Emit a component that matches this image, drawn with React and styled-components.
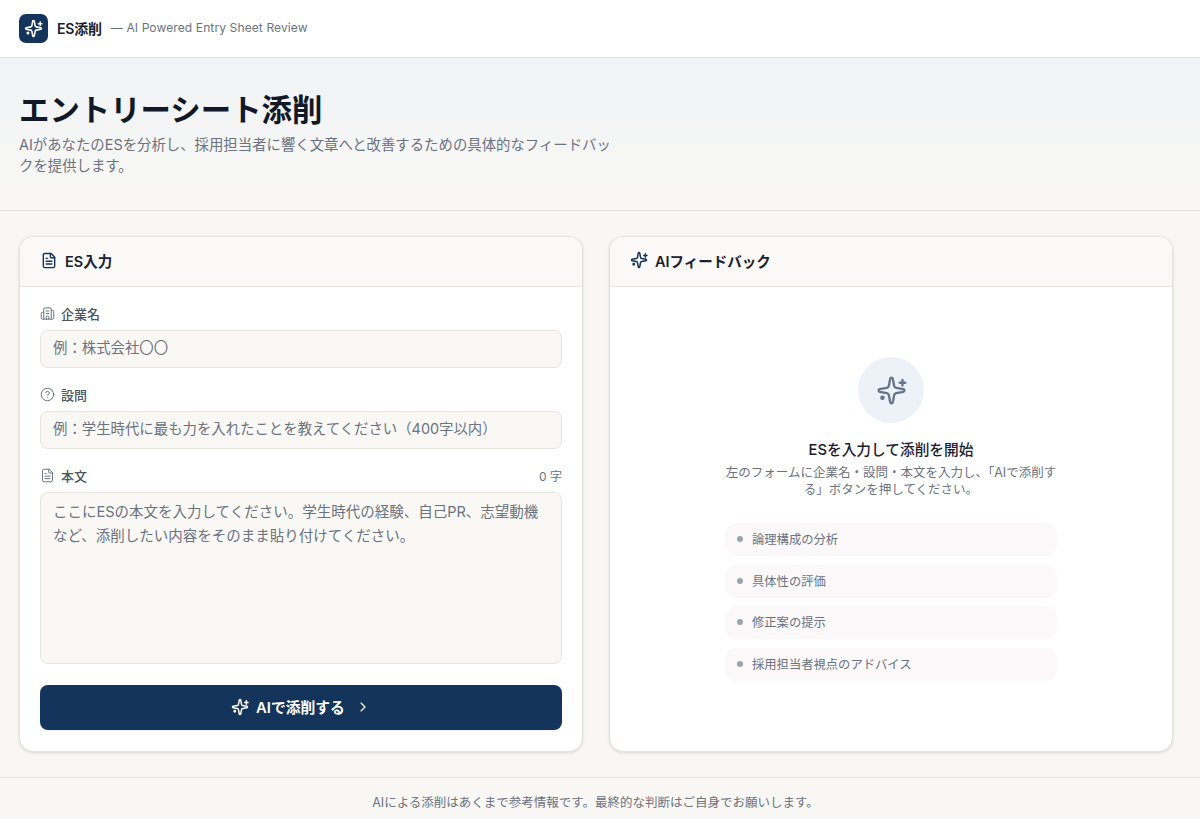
import React from "react";
import styled, { createGlobalStyle } from "styled-components";
import { FileText, Building2, CircleHelp, ChevronRight } from "lucide-react";

const Global = createGlobalStyle`
  * { box-sizing: border-box; }
  html, body { margin: 0; padding: 0; }
  body { background: #f8f7f4; font-family: Inter, "Noto Sans CJK JP", sans-serif; color: #111827; }
`;
const Spark = ({ size = 18, sw = 2 }) => (
  <svg width={size} height={size} viewBox="0 0 24 24" fill="none" stroke="currentColor" strokeWidth={sw} strokeLinecap="round" strokeLinejoin="round">
    <path d="M11.017 2.814a1 1 0 0 1 1.966 0l1.051 5.558a2 2 0 0 0 1.594 1.594l5.558 1.051a1 1 0 0 1 0 1.966l-5.558 1.051a2 2 0 0 0-1.594 1.594l-1.051 5.558a1 1 0 0 1-1.966 0l-1.051-5.558a2 2 0 0 0-1.594-1.594l-5.558-1.051a1 1 0 0 1 0-1.966l5.558-1.051a2 2 0 0 0 1.594-1.594z" />
    <path d="M20.5 3.8v4.4M18.3 6h4.4" />
    <circle cx="5" cy="17.6" r="0.9" fill="currentColor" />
  </svg>
);
const Page = styled.div`width: 1200px; height: 819px; display: flex; flex-direction: column; overflow: hidden;`;
const TopBar = styled.header`height: 58px; flex: none; background: #fff; border-bottom: 1px solid #e3e4e6; display: flex; align-items: center; padding: 0 19px 1px;`;
const Logo = styled.div`width: 29px; height: 29px; border-radius: 7px; background: #14345c; color: #fff; display: flex; align-items: center; justify-content: center;`;
const Brand = styled.span`font-size: 14px; font-weight: 600; margin-left: 9px; color: #1a2230; letter-spacing: -0.2px;`;
const Tagline = styled.span`font-size: 12px; color: #6b7280; margin: 0 0 1px 9px; letter-spacing: 0.12px;`;
const Hero = styled.section`height: 153px; flex: none; padding: 33px 19px 0; background: linear-gradient(180deg, #f1f3f6 0%, #f8f7f4 100%); border-bottom: 1px solid #e6e4df;`;
const Title = styled.h1`margin: 0; font-size: 30.4px; line-height: 38px; font-weight: 700; color: #111827;`;
const Lead = styled.p`margin: 5px 0 0; width: 600px; font-size: 14.4px; line-height: 21px; color: #6b7280;`;
const Main = styled.main`flex: none; height: 567px; padding: 25px 27px 25px 19px; display: grid; grid-template-columns: 564px 564px; gap: 26px; border-bottom: 1px solid #e6e4df;`;
const Card = styled.section`background: #fff; border: 1px solid #e3e1dc; border-radius: 14px; box-shadow: 0 1px 3px rgba(0,0,0,.12); overflow: hidden; display: flex; flex-direction: column;`;
const CardHead = styled.div`height: 50px; flex: none; display: flex; align-items: center; gap: 7px; padding: 0 20px 3px; background: #faf9f7; border-bottom: 1px solid #e8e6e1; font-size: 14.5px; font-weight: 600; color: #1a2230; svg { color: #14345c; flex: none; width: 18px; }`;
const Form = styled.div`flex: 1; display: flex; flex-direction: column; padding: 17px 20px 20px;`;
const Field = styled.div`margin-bottom: ${p => p.$gap}px; display: flex; flex-direction: column;`;
const LabelRow = styled.div`height: 20px; display: flex; align-items: center; gap: 6px; font-size: 13px; font-weight: 500; color: #4b5563; margin: -1px 0 7px; svg { color: #6b7280; }`;
const Count = styled.span`margin-left: auto; font-size: 12px; font-weight: 400; color: #6b7280;`;
const Input = styled.input`height: 37.5px; width: 100%; border: 1px solid #e6e4df; border-radius: 8px; background: #f9f8f5; padding: 0 12px 2px; font: inherit; font-size: 14.4px;
  &::placeholder { color: #6b7280; opacity: 1; }`;
const Area = styled.textarea`height: 172px; width: 100%; resize: none; border: 1px solid #e6e4df; border-radius: 8px; background: #f9f8f5; padding: 7px 12px; font: inherit; font-size: 14.5px; line-height: 24px;
  &::placeholder { color: #6b7280; opacity: 1; }`;
const Submit = styled.button`height: 45.5px; flex: none; border: 0; border-radius: 8px; padding: 0 0 1px; background: #14345c; color: #fff; font: inherit; font-size: 14.8px; font-weight: 600; display: flex; align-items: center; justify-content: center; gap: 7px; box-shadow: 0 1px 2px rgba(0,0,0,.08);`;
const Chevron = styled.span`display: flex; margin-left: 3px;`;
const Empty = styled.div`flex: 1; display: flex; flex-direction: column; align-items: center; padding-top: 70px;`;
const Bubble = styled.div`width: 66px; height: 66px; border-radius: 50%; background: #edf2f9; color: #64748b; display: flex; align-items: center; justify-content: center;`;
const EmptyTitle = styled.h2`margin: 16px 0 0; font-size: 14.7px; line-height: 22px; font-weight: 500; color: #1a2230;`;
const EmptyText = styled.p`margin: 3px 0 0; width: 332px; text-align: center; font-size: 12.5px; line-height: 17px; color: #6b7280;`;
const Points = styled.ul`list-style: none; margin: 25px 0 0; padding: 0; width: 332px; display: flex; flex-direction: column; gap: 8.5px;`;
const Point = styled.li`height: 33px; border-radius: 12px; background: #faf8f8; display: flex; align-items: center; gap: 9px; padding: 0 12px 1px; font-size: 12.3px; color: #6b7280;`;
const Dot = styled.i`width: 6px; height: 6px; border-radius: 50%; background: #9ca3af;`;
const Foot = styled.footer`flex: 1; display: flex; align-items: center; justify-content: center; padding: 5px 9px 0 0; font-size: 12.5px; color: #6b7280;`;

export default function App() {
  return (
    <Page>
      <Global />
      <TopBar>
        <Logo><Spark size={19} /></Logo>
        <Brand>ES添削</Brand>
        <Tagline>— AI Powered Entry Sheet Review</Tagline>
      </TopBar>
      <Hero>
        <Title>エントリーシート添削</Title>
        <Lead>AIがあなたのESを分析し、採用担当者に響く文章へと改善するための具体的なフィードバックを提供します。</Lead>
      </Hero>
      <Main>
        <Card>
          <CardHead><FileText size={17} strokeWidth={2} />ES入力</CardHead>
          <Form>
            <Field $gap={17.5}>
              <LabelRow><Building2 size={15} strokeWidth={1.6} />企業名</LabelRow>
              <Input placeholder="例：株式会社〇〇" />
            </Field>
            <Field $gap={17.5}>
              <LabelRow><CircleHelp size={15} strokeWidth={1.6} />設問</LabelRow>
              <Input placeholder="例：学生時代に最も力を入れたことを教えてください（400字以内）" />
            </Field>
            <Field $gap={20.5}>
              <LabelRow><FileText size={15} strokeWidth={1.6} />本文<Count>0 字</Count></LabelRow>
              <Area placeholder="ここにESの本文を入力してください。学生時代の経験、自己PR、志望動機など、添削したい内容をそのまま貼り付けてください。" />
            </Field>
            <Submit><Spark size={18} />AIで添削する<Chevron><ChevronRight size={16} strokeWidth={1.75} /></Chevron></Submit>
          </Form>
        </Card>
        <Card>
          <CardHead><Spark size={18} />AIフィードバック</CardHead>
          <Empty>
            <Bubble><Spark size={31} sw={1.8} /></Bubble>
            <EmptyTitle>ESを入力して添削を開始</EmptyTitle>
            <EmptyText>左のフォームに企業名・設問・本文を入力し、「AIで添削する」ボタンを押してください。</EmptyText>
            <Points>
              {["論理構成の分析", "具体性の評価", "修正案の提示", "採用担当者視点のアドバイス"].map(t => (
                <Point key={t}><Dot />{t}</Point>
              ))}
            </Points>
          </Empty>
        </Card>
      </Main>
      <Foot>AIによる添削はあくまで参考情報です。最終的な判断はご自身でお願いします。</Foot>
    </Page>
  );
}
